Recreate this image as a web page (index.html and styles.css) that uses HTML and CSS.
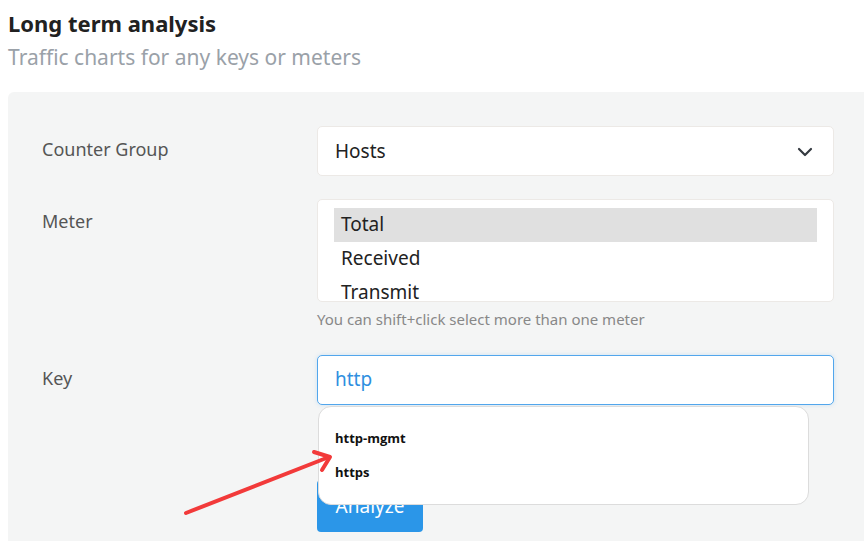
FILE: index.html
```html
<!DOCTYPE html>
<html>
<head>
<meta charset="utf-8">
<link rel="stylesheet" href="styles.css">
</head>
<body>
<div class="page">
  <header class="head">
    <h1 class="title">Long term analysis</h1>
    <p class="subtitle">Traffic charts for any keys or meters</p>
  </header>
  <section class="panel">
    <div class="row">
      <label class="label">Counter Group</label>
      <div class="field">
        <div class="select">
          <span>Hosts</span>
          <svg class="chev" width="16" height="10" viewBox="0 0 16 10"><path d="M2 2 L8 8 L14 2" fill="none" stroke="#343a40" stroke-width="2.2" stroke-linecap="round" stroke-linejoin="round"/></svg>
        </div>
      </div>
    </div>
    <div class="row">
      <label class="label label-top">Meter</label>
      <div class="field">
        <div class="listbox">
          <div class="opt sel">Total</div>
          <div class="opt">Received</div>
          <div class="opt">Transmit</div>
        </div>
        <div class="help">You can shift+click select more than one meter</div>
      </div>
    </div>
    <div class="row row-key">
      <label class="label">Key</label>
      <div class="field field-key">
        <div class="input">http</div>
        <div class="suggest">
          <div class="sug-item">http-mgmt</div>
          <div class="sug-item">https</div>
        </div>
        <button class="btn">Analyze</button>
      </div>
    </div>
  </section>
  <svg class="arrow" width="864" height="541" viewBox="0 0 864 541">
    <g stroke="#f23a3a" stroke-width="4" stroke-linecap="round" fill="none">
      <path d="M186 513 L329 457"/>
      <path d="M314 452 L330 457 L322 470" stroke-linejoin="round"/>
    </g>
  </svg>
</div>
</body>
</html>
```
FILE: styles.css
```css
* { box-sizing: border-box; }
html, body { margin: 0; padding: 0; background: #fff; overflow: hidden; }
body { font-family: "Noto Sans", "Open Sans", sans-serif; width: 864px; height: 541px; }
.page { position: relative; padding-left: 8px; height: 541px; }
.head { padding-top: 8px; }
.title { margin: 0; font-size: 22px; font-weight: 700; color: #212121; line-height: 30px; }
.subtitle { margin: 4px 0 0; font-size: 21px; color: #9aa1a8; line-height: 30px; }
.panel { margin-top: 20px; background: #f4f5f5; border-top-left-radius: 6px; padding: 34px 30px 0 34px; height: 449px; }
.row { display: flex; margin-bottom: 23px; }
.label { width: 275px; flex: none; font-size: 18px; color: #555; line-height: 24px; padding-top: 11px; }
.label-top { padding-top: 10px; }
.field { flex: 1; position: relative; }
.select { height: 50px; background: #fff; border: 1px solid #ece9e6; border-radius: 5px; display: flex; align-items: center; justify-content: space-between; padding: 0 20px 0 17px; font-size: 19px; color: #222; }
.chev { margin-top: 1px; }
.listbox { height: 103px; background: #fff; border: 1px solid #ece9e6; border-radius: 5px; padding: 8px 16px 0 16px; overflow: hidden; }
.opt { height: 34px; line-height: 33px; font-size: 19px; color: #222; padding-left: 7px; }
.opt.sel { background: #e0e0e0; }
.help { margin-top: 7px; font-size: 15px; color: #888; line-height: 20px; }
.row-key { margin-top: 26px; }
.input { height: 50px; background: #fff; border: 1px solid #52a6ec; border-radius: 5px; padding: 0 17px; font-size: 19px; line-height: 47px; color: #2f8fe0; box-shadow: 0 0 4px rgba(82,166,236,0.25); }
.suggest { position: absolute; top: 51px; left: 1px; width: 491px; height: 99px; background: #fff; border: 1px solid #dcdcdc; border-radius: 13px; padding-top: 21px; z-index: 2; }
.sug-item { font-family: "Open Sans", sans-serif; font-weight: 700; font-size: 13px; color: #111; padding-left: 16px; height: 34px; line-height: 20px; }
.btn { margin-top: 75px; width: 106px; height: 52px; background: #2b96e8; color: #fff; border: none; border-radius: 4px; font-family: inherit; font-size: 19px; padding: 0; display: block; }
.arrow { position: absolute; left: 0; top: 0; z-index: 5; pointer-events: none; }
```
